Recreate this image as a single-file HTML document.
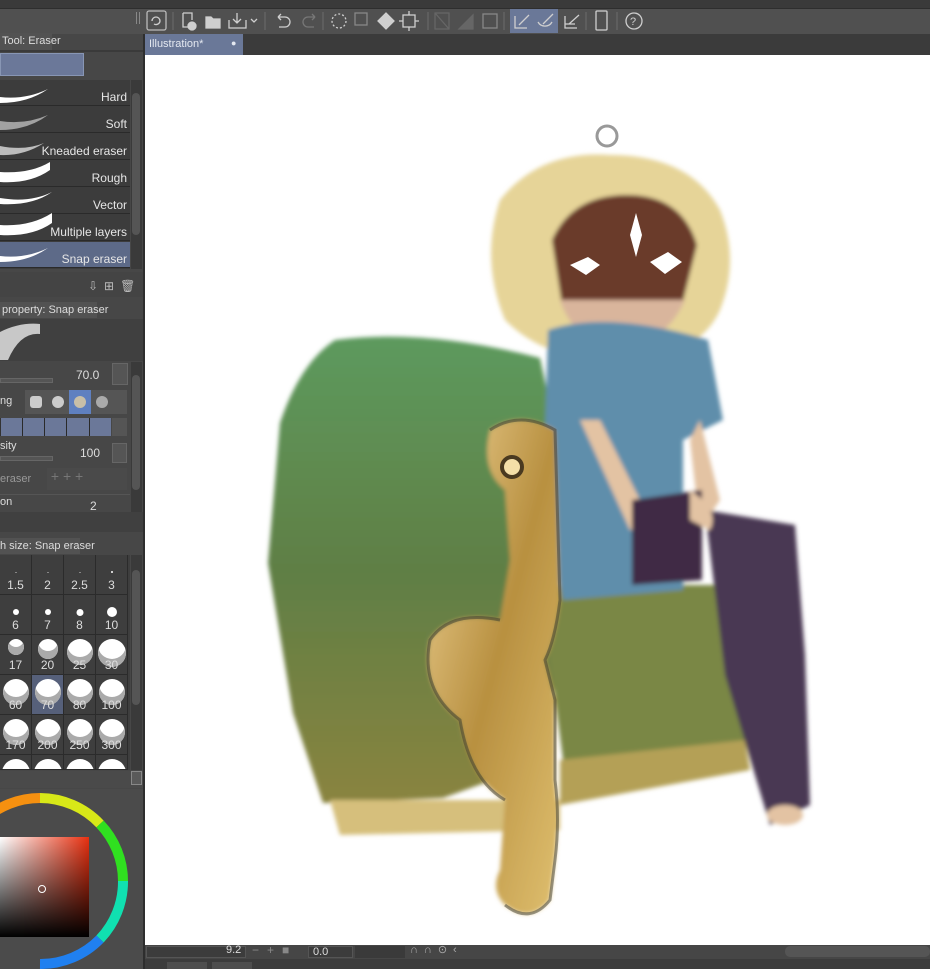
<!DOCTYPE html>
<html><head><meta charset="utf-8"><style>
*{margin:0;padding:0;box-sizing:border-box}
body{width:930px;height:969px;overflow:hidden;background:#474747;font-family:"Liberation Sans",sans-serif;position:relative;color:#ddd}
.a{position:absolute;white-space:nowrap}
.row{position:absolute;left:0;width:130px;height:26px;background:#3c3c3c;border-bottom:1px solid #2a2a2a;font-size:12px;text-align:right;padding-right:3px;line-height:34px;color:#e6e6e6}
.cell{position:absolute;width:32px;height:40px;border-right:1px solid #2b2b2b;border-bottom:1px solid #2b2b2b;background:#3e3e3e;font-size:12px;color:#ddd;text-align:center;overflow:hidden}
.cell i{position:absolute;left:50%;transform:translateX(-50%);background:#fff;border-radius:50%;box-shadow:inset 0 -8px 0 #aaa}
.cell span{position:absolute;left:0;right:0;bottom:2px}
</style></head><body>
<div class="a" style="left:0;top:0;width:930px;height:8px;background:#3a3a3a"></div>
<div class="a" style="left:0;top:8px;width:930px;height:26px;background:#505050;border-top:1px solid #2e2e2e"></div>
<div class="a" style="left:136px;top:12px;width:4px;height:12px;border-left:1px solid #888;border-right:1px solid #888"></div>
<svg class="a" style="left:145px;top:8px" width="520" height="26" viewBox="0 0 520 26" fill="none" stroke="#cfcfcf" stroke-width="1.3">
<rect x="2" y="3" width="19" height="19" rx="2" stroke="#bbb"/><path d="M7 13a4 4 0 1 1 8 0a4 4 0 0 1-6 3" />
<line x1="28" y1="4" x2="28" y2="22" stroke="#666"/>
<path d="M38 5h9v7M38 5v14h6"/><circle cx="47" cy="18" r="4" fill="#cfcfcf"/>
<path d="M61 9h5l2 2h7v9H61z" fill="#cfcfcf"/>
<path d="M84 12v8h17v-8M92 5v10M88 11l4 4 4-4"/><path d="M106 11l3 3 3-3"/>
<line x1="120" y1="4" x2="120" y2="22" stroke="#666"/>
<path d="M133 9h7a5 5 0 0 1 0 10h-6M133 9l3-3M133 9l3 3"/>
<path d="M170 9h-7a5 5 0 0 0 0 10h6M170 9l-3-3M170 9l-3 3" stroke="#777"/>
<line x1="178" y1="4" x2="178" y2="22" stroke="#666"/>
<circle cx="194" cy="13" r="7" stroke-dasharray="2 2"/>
<rect x="210" y="5" width="12" height="12" stroke="#888"/>
<path d="M233 13l8-8 8 8-8 8z" fill="#cfcfcf"/>
<rect x="258" y="7" width="12" height="12"/><path d="M264 3v4M264 19v4M254 13h4M270 13h4"/>
<line x1="283" y1="4" x2="283" y2="22" stroke="#666"/>
<path d="M290 5l14 16M290 5h14v16H290z" stroke="#666"/>
<path d="M314 21l14-14v14z" fill="#666" stroke="#666"/>
<rect x="338" y="6" width="14" height="14" stroke="#888"/>
<line x1="359" y1="4" x2="359" y2="22" stroke="#666"/>
<rect x="365" y="1" width="48" height="24" fill="#6a7898" stroke="none"/>
<path d="M370 8v12h12M374 17l10-10"/><path d="M393 14a8 8 0 0 0 14 0M398 16l10-10"/>
<path d="M420 8v12h12M420 16h10M424 16l10-9"/>
<line x1="441" y1="4" x2="441" y2="22" stroke="#666"/>
<rect x="451" y="3" width="11" height="19" rx="1"/>
<line x1="472" y1="4" x2="472" y2="22" stroke="#666"/>
<circle cx="489" cy="13" r="8"/><text x="485" y="17" fill="#cfcfcf" stroke="none" font-size="11" font-family="Liberation Sans">?</text>
</svg>
<div class="a" style="left:0;top:34px;width:144px;height:935px;background:#474747"></div>
<div class="a" style="left:0;top:33px;width:52px;height:17px;background:#525252;font-size:11px;line-height:17px;padding-left:2px;overflow:visible">Tool: Eraser</div>
<div class="a" style="left:0;top:50px;width:144px;height:2px;background:#3a3a3a"></div>
<div class="a" style="left:0;top:53px;width:84px;height:23px;background:#6b7899;border:1px solid #8896b4"></div>
<div class="a" style="left:0;top:80px;width:130px;height:189px;background:#3c3c3c"></div>
<div class="row" style="top:80px">Hard</div>
<div class="row" style="top:107px">Soft</div>
<div class="row" style="top:134px">Kneaded eraser</div>
<div class="row" style="top:161px">Rough</div>
<div class="row" style="top:188px">Vector</div>
<div class="row" style="top:215px">Multiple layers</div>
<div class="row" style="top:242px;background:#5d6a88">Snap eraser</div>
<svg class="a" style="left:0;top:80px" width="60" height="190">
<path d="M0 17q25 3 48-8q-20 14-48 14z" fill="#fff"/>
<path d="M0 41q25 4 48-6q-20 15-48 15z" fill="#ccc" opacity=".7"/>
<path d="M0 66q25 5 44-3q-20 13-44 12z" fill="#ddd" opacity=".8"/>
<path d="M0 92q30 2 50-10v8q-20 14-50 12z" fill="#fff"/>
<path d="M0 118q30 5 52-6q-20 14-52 12z" fill="#fff"/>
<path d="M0 145q30 2 52-12v10q-20 14-52 12z" fill="#fff"/>
<path d="M0 176q25 3 48-8q-20 14-48 14z" fill="#fff"/>
</svg>
<div class="a" style="left:131px;top:80px;width:11px;height:189px;background:#3a3a3a"></div>
<div class="a" style="left:132px;top:93px;width:8px;height:142px;background:#555;border-radius:4px"></div>
<div class="a" style="left:0;top:272px;width:144px;height:25px;background:#444"></div>
<div class="a" style="left:88px;top:279px;font-size:12px;color:#bbb;letter-spacing:6px">⇩⊞🗑</div>
<div class="a" style="left:0;top:302px;width:97px;height:16px;background:#525252;font-size:11px;line-height:16px;padding-left:2px">property: Snap eraser</div>
<div class="a" style="left:0;top:319px;width:144px;height:42px;background:#404040"></div>
<svg class="a" style="left:0;top:320px" width="40" height="40"><path d="M0 12q20-10 40-8v10q-20-2-32 26H0z" fill="#c8c8c8"/></svg>
<div class="a" style="left:0;top:362px;width:130px;height:150px;background:#474747"></div>
<div class="a" style="left:0;top:378px;width:53px;height:5px;background:#555;border:1px solid #666"></div>
<div class="a" style="left:76px;top:368px;font-size:12px">70.0</div>
<div class="a" style="left:112px;top:363px;width:16px;height:22px;background:#555;border:1px solid #666"></div>
<div class="a" style="left:0;top:395px;font-size:11px">ng</div>
<div class="a" style="left:25px;top:390px;width:102px;height:24px;background:#555"></div>
<div class="a" style="left:69px;top:390px;width:22px;height:24px;background:#5f80c0"></div>
<div class="a" style="left:52px;top:396px;width:12px;height:12px;border-radius:50%;background:#ccc"></div>
<div class="a" style="left:74px;top:396px;width:12px;height:12px;border-radius:50%;background:#c8bfa8"></div>
<div class="a" style="left:96px;top:396px;width:12px;height:12px;border-radius:50%;background:#aaa"></div>
<div class="a" style="left:30px;top:396px;width:12px;height:12px;background:#ccc;border-radius:3px"></div>
<div class="a" style="left:0;top:418px;width:111px;height:18px;background:#6b7899;border-left:1px solid #333"></div>
<div class="a" style="left:22px;top:418px;width:1px;height:18px;background:#2a2a2a;box-shadow:22px 0 #2a2a2a,44px 0 #2a2a2a,67px 0 #2a2a2a"></div>
<div class="a" style="left:112px;top:418px;width:15px;height:18px;background:#555"></div>
<div class="a" style="left:0;top:440px;font-size:11px">sity</div>
<div class="a" style="left:0;top:456px;width:53px;height:5px;background:#555;border:1px solid #666"></div>
<div class="a" style="left:80px;top:446px;font-size:12px">100</div>
<div class="a" style="left:112px;top:443px;width:15px;height:20px;background:#555;border:1px solid #666"></div>
<div class="a" style="left:0;top:473px;font-size:11px;color:#999">eraser</div>
<div class="a" style="left:47px;top:468px;width:80px;height:22px;background:#4a4a4a;color:#777;font-size:14px">&nbsp;+ + +</div>
<div class="a" style="left:0;top:494px;width:130px;height:1px;background:#555"></div>
<div class="a" style="left:0;top:496px;font-size:11px">on</div>
<div class="a" style="left:90px;top:499px;font-size:12px">2</div>
<div class="a" style="left:131px;top:362px;width:11px;height:150px;background:#3a3a3a"></div>
<div class="a" style="left:132px;top:375px;width:8px;height:115px;background:#555;border-radius:4px"></div>
<div class="a" style="left:0;top:512px;width:144px;height:20px;background:#404040"></div>
<div class="a" style="left:0;top:538px;width:80px;height:16px;background:#525252;font-size:11px;line-height:16px">h size: Snap eraser</div>
<div class="a" style="left:0;top:555px;width:130px;height:215px;background:#3e3e3e"></div>
<div id="grid"></div>
<div class="a" style="left:131px;top:555px;width:11px;height:215px;background:#3a3a3a"></div>
<div class="a" style="left:132px;top:570px;width:8px;height:135px;background:#555;border-radius:4px"></div>
<div class="a" style="left:0;top:771px;width:144px;height:17px;background:#4a4a4a"></div>
<div class="a" style="left:131px;top:771px;width:11px;height:14px;background:#5a5a5a;border:1px solid #888"></div>
<div class="a" style="left:0;top:789px;width:144px;height:180px;background:#4b4b4b"></div>
<svg class="a" style="left:0;top:789px" width="144" height="180">
<defs><linearGradient id="sv" x1="0" x2="1"><stop offset="0" stop-color="#fff"/><stop offset="1" stop-color="#e83010"/></linearGradient>
<linearGradient id="sb" x1="0" y1="0" x2="0" y2="1"><stop offset="0" stop-color="#000" stop-opacity="0"/><stop offset="1" stop-color="#000"/></linearGradient></defs>
<path d="M-43 92A83 83 0 0 1 40 9" stroke="#f59010" stroke-width="10" fill="none"/>
<path d="M40 9A83 83 0 0 1 100 35" stroke="#d8e818" stroke-width="10" fill="none"/>
<path d="M100 35A83 83 0 0 1 123 92" stroke="#30e020" stroke-width="10" fill="none"/>
<path d="M123 92A83 83 0 0 1 100 150" stroke="#10e0b0" stroke-width="10" fill="none"/>
<path d="M100 150A83 83 0 0 1 40 175" stroke="#2080f0" stroke-width="10" fill="none"/>
<rect x="0" y="48" width="89" height="100" fill="url(#sv)"/><rect x="0" y="48" width="89" height="100" fill="url(#sb)"/>
<circle cx="42" cy="100" r="3.5" fill="none" stroke="#fff"/>
</svg>
<div class="a" style="left:144px;top:34px;width:786px;height:22px;background:#3b3b3b"></div>
<div class="a" style="left:145px;top:34px;width:98px;height:21px;background:#6a7898;font-size:11px;line-height:21px;padding-left:4px;color:#e4e8f0">Illustration*<span style="position:absolute;left:86px;top:-1px;font-size:9px">●</span></div>
<div class="a" style="left:145px;top:55px;width:785px;height:890px;background:#fff"></div>
<svg class="a" style="left:0;top:0" width="930" height="969">
<defs>
<linearGradient id="gr" x1="0" y1="0" x2="0" y2="1"><stop offset="0" stop-color="#5d9a5e"/><stop offset=".5" stop-color="#5f7f45"/><stop offset="1" stop-color="#8a8440"/></linearGradient>
<linearGradient id="gd" x1="0" y1="0" x2="1" y2="1"><stop offset="0" stop-color="#f0d498"/><stop offset=".5" stop-color="#b89040"/><stop offset="1" stop-color="#e0c070"/></linearGradient>
<filter id="bl"><feGaussianBlur stdDeviation="2"/></filter>
</defs>
<g filter="url(#bl)">
<path d="M335 340q90-12 205 18l15 70-2 330-110 40-120 5-30-90-25-150 12-140q20-60 55-83z" fill="url(#gr)"/>
<path d="M540 585l210 0 5 160-190 30z" fill="#7a8745"/>
<path d="M560 760l185-20 5 30-190 35z" fill="#b4a056"/>
<path d="M330 800l230 0 0 30-220 5z" fill="#d6bf7c"/>
<path d="M500 200q40-50 110-45q80 0 110 55q20 50 0 100q-20 45-90 50q-80 5-125-40q-25-60-5-120z" fill="#e6d498"/>
<path d="M552 240q20-45 75-45q55 0 70 50l-15 60-120 0z" fill="#6a3a2c"/>
<path d="M560 300h125q-20 45-65 45q-45 0-60-45z" fill="#d9b59c"/>
<path d="M548 330q60-20 160 10l15 80-40 20 0 150-120 10-20-100z" fill="#5f8eab"/>
<path d="M600 420l40 80 10 30-20 0-50-110z" fill="#e3c3a3"/>
<path d="M700 420l20 80-20 30-10-90z" fill="#e3c3a3"/>
<path d="M632 500l70-10 0 90-70 5z" fill="#3f2a45"/>
<path d="M705 510l90 15 10 130 5 150-40 20-45-150z" fill="#4a3752"/>
<path d="M690 490q30 20 20 40l-20-10z" fill="#e3c3a3"/>
<ellipse cx="785" cy="815" rx="18" ry="10" fill="#e3c3a3"/>
<path d="M490 430Q520 410 555 430L560 600Q555 640 545 660L555 700L555 780Q560 820 555 860L550 900Q530 925 505 905Q490 890 500 870L505 800Q470 780 460 720Q420 690 430 640Q450 610 500 620L510 560L505 490Q480 470 490 430Z" fill="url(#gd)"/>
</g>
<g fill="none" stroke="#3a3a30" stroke-opacity=".5" stroke-width="3">
<path d="M490 430Q520 410 555 430L560 600Q555 640 545 660L555 700L555 780Q560 820 555 860L550 900Q530 925 505 905"/>
<path d="M500 620Q450 610 430 640Q420 690 460 720Q470 780 505 800"/>
</g>
<circle cx="607" cy="136" r="10" fill="none" stroke="#999" stroke-width="3"/>
<circle cx="512" cy="467" r="10" fill="#f4dfa8" stroke="#4a3a20" stroke-width="4"/>
<path d="M570 265l18-8 12 8-14 10zM650 262l18-10 14 10-17 12zM630 235l6-22 6 22-6 22z" fill="#fff"/>
</svg>
<div class="a" style="left:144px;top:945px;width:786px;height:14px;background:#464646"></div>
<div class="a" style="left:146px;top:946px;width:100px;height:12px;background:#3c3c3c;border:1px solid #555"></div>
<div class="a" style="left:226px;top:944px;font-size:11px">9.2</div>
<div class="a" style="left:252px;top:943px;font-size:12px;color:#888;letter-spacing:8px">−+■</div>
<div class="a" style="left:308px;top:946px;width:45px;height:12px;background:#3c3c3c;border:1px solid #555;font-size:11px;line-height:11px;padding-left:4px">0.0</div>
<div class="a" style="left:355px;top:946px;width:50px;height:12px;background:#3a3a3a"></div>
<div class="a" style="left:410px;top:943px;font-size:11px;color:#aaa;letter-spacing:6px">∩∩⊙‹</div>
<div class="a" style="left:785px;top:946px;width:145px;height:11px;background:#555;border-radius:5px"></div>
<div class="a" style="left:144px;top:959px;width:786px;height:10px;background:#3c3c3c"></div>
<div class="a" style="left:167px;top:962px;width:40px;height:7px;background:#4e4e4e;box-shadow:45px 0 #4e4e4e"></div>
<div class="a" style="left:143px;top:34px;width:2px;height:935px;background:#2e2e2e"></div>
<script>
(function(){
var v=[["1.5","2","2.5","3"],["6","7","8","10"],["17","20","25","30"],["60","70","80","100"],["170","200","250","300"]];
var s=[[1,1,1,2],[6,6,7,10],[16,20,26,28],[26,26,26,26],[26,26,26,26]];
var h="";for(var r=0;r<5;r++)for(var c=0;c<4;c++){var x=c*32,y=555+r*40,d=s[r][c];
var bg=(r==3&&c==1)?"#56607a":"#3e3e3e";
var ty=r<2?(17-d/2):4;
h+='<div class="cell" style="left:'+x+'px;top:'+y+'px;background:'+bg+'"><i style="width:'+d+'px;height:'+d+'px;top:'+ty+'px;'+(r<2?'box-shadow:none':'')+'"></i><span>'+v[r][c]+'</span></div>';}
for(var c=0;c<4;c++)h+='<div class="cell" style="left:'+(c*32)+'px;top:755px;height:15px"><i style="width:28px;height:28px;top:4px"></i></div>';
document.getElementById("grid").innerHTML=h;
})();
</script>
</body></html>
